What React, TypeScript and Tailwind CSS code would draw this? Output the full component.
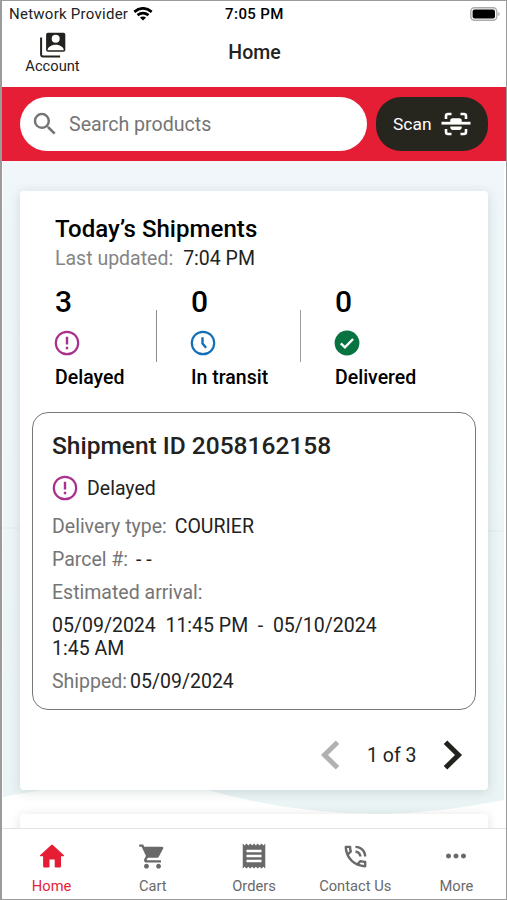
import React from "react";
import clsx from "clsx";
import { MdMoreHoriz, MdOutlinePhoneInTalk, MdReceipt, MdSearch, MdShoppingCart } from "react-icons/md";

interface StatProps {
  count: number;
  label: string;
  icon: React.ReactNode;
  className?: string;
}

interface DetailProps {
  label: string;
  value?: string;
  gap?: string;
}

const AccountIcon = () => (
  <svg viewBox="0 0 26 26" className="h-[26px] w-[26px]" fill="#22221e">
    <path d="M1.1 5.5v17.1q0 2 2 2h17" fill="none" stroke="#22221e" strokeWidth="2" />
    <path
      fillRule="evenodd"
      d="M8 .8h15.5q1.8 0 1.8 1.8V18q0 1.8-1.8 1.8H8Q6.1 19.8 6.1 18V2.6Q6.1.8 8 .8ZM15.7 2.8a4 4 0 1 0 0 8a4 4 0 0 0 0-8ZM7.6 18.2h16.2c0-3.5-4.7-5.4-8.1-5.4s-8.1 1.9-8.1 5.4Z"
    />
  </svg>
);

const WifiIcon = () => (
  <svg viewBox="0 0 20 14" className="h-[14px] w-[20px]" fill="none" stroke="#000" strokeWidth="2.8">
    <path d="M1.3 4.8Q10-2 18.7 4.8" />
    <path d="M4.5 8.2Q10 4 15.5 8.2" />
    <path d="M10 13.6 6.9 10.5Q10 8.3 13.1 10.5Z" fill="#000" stroke="none" />
  </svg>
);

const ScanIcon = () => (
  <svg viewBox="0 0 30 24" className="h-[24px] w-[30px]" fill="none" stroke="#fff" strokeWidth="2.6">
    <path d="M5 7V4q0-2 2-2h3.5M19.5 2H23q2 0 2 2v3M5 17V20q0 2 2 2h3.5M19.5 22H23q2 0 2-2v-3" />
    <path d="M.5 11.2h29" strokeWidth="2.8" />
    <path d="M9.3 10.5V7.6l1.6-1.4h8.2l1.6 1.4v2.9ZM9.3 14.4h11.4v1.8l-1.6 1.8h-8.2l-1.6-1.8Z" fill="#fff" stroke="none" />
  </svg>
);

const DelayedIcon = () => (
  <svg viewBox="0 0 26 26" className="size-[26px]" fill="none" stroke="#a9308d">
    <circle cx="13" cy="13" r="11.2" strokeWidth="2.2" />
    <path d="M13 6.8v7.6M13 16.8v2.5" strokeWidth="2.4" />
  </svg>
);

const TransitIcon = () => (
  <svg viewBox="0 0 26 26" className="size-[26px]" fill="none" stroke="#1370b8">
    <circle cx="13" cy="13" r="11.2" strokeWidth="2.2" />
    <path d="M12.5 7.3v6.2l3.6 4.3" strokeWidth="2.4" />
  </svg>
);

const DeliveredIcon = () => (
  <svg viewBox="0 0 26 26" className="size-[26px]" fill="none">
    <circle cx="13" cy="13" r="12.4" fill="#067341" />
    <path d="m6.8 13.4 4.1 4 8.2-8.4" stroke="#fff" strokeWidth="2.4" />
  </svg>
);

const HomeIcon = () => (
  <svg viewBox="0 0 26 24" className="h-[24px] w-[26px]" fill="#e51d35">
    <path d="M12.2.9q.8-.7 1.6 0L25.2 11.4l-.5.9H22v10q0 1.2-1.2 1.2h-4.3q-.8 0-.8-.8v-7.2h-5.2v7.2q0 .8-.8.8H5.3q-1.2 0-1.2-1.2v-10H1.3l-.5-.9Z" />
  </svg>
);

// Single figure of the shipment summary
const Stat: React.FC<StatProps> = ({ count, label, icon, className }) => (
  <div className={clsx("flex flex-col text-black", className)}>
    <span className="text-[30px] leading-[36px] font-medium">{count}</span>
    <span className="-ml-px mt-[10px] h-[26px]">{icon}</span>
    <span className="mt-[10px] text-[19.5px] leading-6 font-medium whitespace-nowrap">{label}</span>
  </div>
);

const Detail: React.FC<DetailProps> = ({ label, value, gap = "gap-2" }) => (
  <div className={clsx("flex h-[33px] items-center", gap)}>
    <span className="text-[#757575]">{label}</span>
    {value && <span>{value}</span>}
  </div>
);

const navItems = [
  { label: "Home", icon: <HomeIcon />, active: true },
  { label: "Cart", icon: <MdShoppingCart size={29} /> },
  { label: "Orders", icon: <MdReceipt size={30} /> },
  { label: "Contact Us", icon: <MdOutlinePhoneInTalk size={29} /> },
  { label: "More", icon: <MdMoreHoriz size={30} /> },
];

const App: React.FC = () => {
  return (
    <div className="flex h-[900px] w-[507px] flex-col overflow-hidden border border-l-2 border-[#9b9b9b] bg-white font-[Roboto,sans-serif] text-[#22221e]">
      {/* Status bar */}
      <div className="grid h-[25px] shrink-0 grid-cols-3 items-center pl-[7px] pr-1.5 text-[15px]">
        <div className="flex items-center gap-[5px]">
          <span className="pt-0.5 tracking-[0.26px] whitespace-nowrap">Network Provider</span>
          <WifiIcon />
        </div>
        <span className="pt-0.5 text-center font-medium tracking-[0.4px] text-black">7:05 PM</span>
        <svg viewBox="0 0 30 14" className="h-[14px] w-[30px] justify-self-end">
          <rect x=".8" y=".8" width="26" height="12.4" rx="3.6" fill="#fff" stroke="#aaa" strokeWidth="1.4" />
          <rect x="2.6" y="2.4" width="22.4" height="9.2" rx="2" fill="#000" />
          <path d="M28.2 5v4q1.5-.6 1.5-2t-1.5-2Z" fill="#aaa" />
        </svg>
      </div>

      {/* Header */}
      <header className="grid h-[61px] shrink-0 grid-cols-3 text-center">
        <div className="flex w-[101px] flex-col items-center pt-[6px]">
          <AccountIcon />
          <span className="-mt-px text-[14.7px] leading-[18px]">Account</span>
        </div>
        <h1 className="pt-[15px] pl-px text-[19.5px] leading-6 font-medium">Home</h1>
      </header>

      {/* Search */}
      <div className="flex h-[74px] shrink-0 gap-[9px] bg-[#e51d35] pt-[10px] pr-[18px] pl-[18px]">
        <div className="flex h-[54px] w-[347px] shrink-0 items-center gap-[9px] rounded-full bg-white pl-[10px] text-[#757575]">
          <MdSearch size={30} />
          <span className="pt-0.5 text-[19.6px]">Search products</span>
        </div>
        <button className="flex h-[54px] w-[112px] shrink-0 items-center gap-[9px] rounded-[25px] bg-[#27261e] pl-[17px] text-[17.4px] text-white">
          Scan
          <ScanIcon />
        </button>
      </div>

      {/* Content */}
      <main className="relative min-h-0 flex-1 overflow-hidden px-[18px] pt-[30px]">
        <svg viewBox="0 0 504 668" className="absolute inset-0 h-[668px] w-[504px]">
          <defs>
            <linearGradient id="sky" x1="0" y1="0" x2="0" y2="1">
              <stop offset="0" stopColor="#f0f6fa" />
              <stop offset=".3" stopColor="#eef6f7" />
              <stop offset="1" stopColor="#ebf4f4" />
            </linearGradient>
          </defs>
          <path d="M1 0h501v639q-65 13-124 14-90 0-176-25H44L1 636Z" fill="url(#sky)" />
          <path d="M1 367h17M485 370h17" stroke="#e2ebee" />
        </svg>

        <section className="relative h-[599px] w-[468px] rounded bg-white px-3 pt-[24px] shadow-[0_2px_12px_rgba(0,40,40,0.14)]">
          <div className="px-[23px]">
            <h2 className="text-2xl leading-[28px] font-medium tracking-[0.05px] text-black">Today’s Shipments</h2>
            <p className="mt-[4px] flex gap-[10px] text-[19.5px] leading-6">
              <span className="text-[#858585]">Last updated:</span>
              <span>7:04 PM</span>
            </p>
            <div className="mt-[13px] flex">
              <Stat count={3} label="Delayed" icon={<DelayedIcon />} className="w-[101px]" />
              <div className="mt-[26px] h-[52px] w-px bg-[#8d8d8d]" />
              <Stat count={0} label="In transit" icon={<TransitIcon />} className="ml-[34px] w-[109px]" />
              <div className="mt-[26px] h-[52px] w-px bg-[#9d9d9d]" />
              <Stat count={0} label="Delivered" icon={<DeliveredIcon />} className="ml-[34px]" />
            </div>
          </div>

          <article className="mt-[22px] h-[298px] w-[444px] rounded-2xl border border-[#777] px-[19px] pt-[19px] text-[19.5px]">
            <h3 className="text-[24.5px] leading-[28px] font-medium">Shipment ID 2058162158</h3>
            <div className="mt-[15px] mb-[9px] flex h-[26px] items-center gap-[9px]">
              <DelayedIcon />
              <span className="pt-0.5">Delayed</span>
            </div>
            <Detail label="Delivery type:" value="COURIER" />
            <Detail label="Parcel #:" value="- -" />
            <Detail label="Estimated arrival:" />
            <p className="mt-[5px] mb-[5px] leading-[23px] whitespace-pre">
              {"05/09/2024  11:45 PM  -  05/10/2024\n1:45 AM"}
            </p>
            <Detail label="Shipped:" value="05/09/2024" gap="gap-[3px]" />
          </article>

          <div className="mt-[30px] flex h-[30px] items-center text-[19.5px]">
            <svg viewBox="0 0 20 30" className="ml-[288px] h-[30px] w-5" fill="none" stroke="#b1b1b1" strokeWidth="5">
              <path d="M17.5 2.2 4.5 15l13 12.8" />
            </svg>
            <span className="ml-[27px] w-[50px] pt-0.5 whitespace-nowrap">1 of 3</span>
            <svg viewBox="0 0 20 30" className="ml-[26px] h-[30px] w-5" fill="none" stroke="#22221e" strokeWidth="5">
              <path d="M2.5 2.2 15.5 15l-13 12.8" />
            </svg>
          </div>
        </section>

        <section className="relative mt-[24px] h-[60px] w-[468px] rounded bg-white shadow-[0_2px_12px_rgba(0,0,0,0.13)]" />
      </main>

      {/* Bottom navigation */}
      <nav className="relative -mx-px flex h-[71px] shrink-0 border-t border-[#e2e2e2] bg-white">
        {navItems.map((item) => (
          <a
            key={item.label}
            className={clsx(
              "flex flex-1 flex-col items-center pt-[12px]",
              item.active ? "text-[#e51d35]" : "text-[#696969]"
            )}
          >
            <span className="flex h-[30px] items-center">{item.icon}</span>
            <span className="mt-[6px] text-[14.7px] leading-[18px] whitespace-nowrap">{item.label}</span>
          </a>
        ))}
      </nav>
    </div>
  );
};

export default App;
